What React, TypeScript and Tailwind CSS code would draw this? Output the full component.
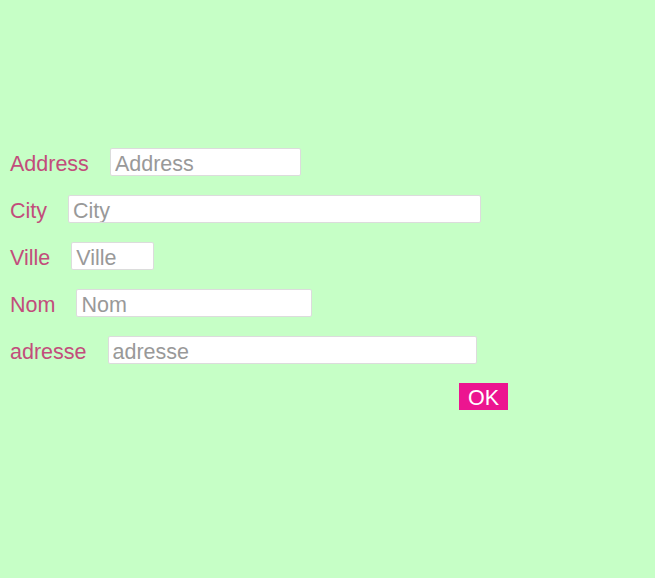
const FIELDS: [string, number][] = [
  ['Address', 191],
  ['City', 413],
  ['Ville', 83],
  ['Nom', 236],
  ['adresse', 369],
]

export default function App() {
  return (
    <div className="min-h-[578px] w-full bg-[#c6ffc6] pt-[148px] pl-[10px] font-['Liberation_Sans',Arial,sans-serif]">
      {FIELDS.map(([label, w]) => (
        <div key={label} className="flex items-center h-[28px] mb-[19px]">
          <label className="text-[21.5px] leading-none text-[#c24d7b] mr-[21px] pt-[6px]">{label}</label>
          <input
            placeholder={label}
            style={{ width: w }}
            className="h-[28px] bg-white border border-[#dcdcdc] rounded-[2px] px-[4px] pt-[4px] pb-0 text-[21.5px] leading-none text-[#555] placeholder:text-[#999] outline-none"
          />
        </div>
      ))}
      <button className="ml-[449px] w-[49px] h-[27px] bg-[#ec1590] text-white text-[21.5px] leading-none pt-[5px]">OK</button>
    </div>
  )
}
